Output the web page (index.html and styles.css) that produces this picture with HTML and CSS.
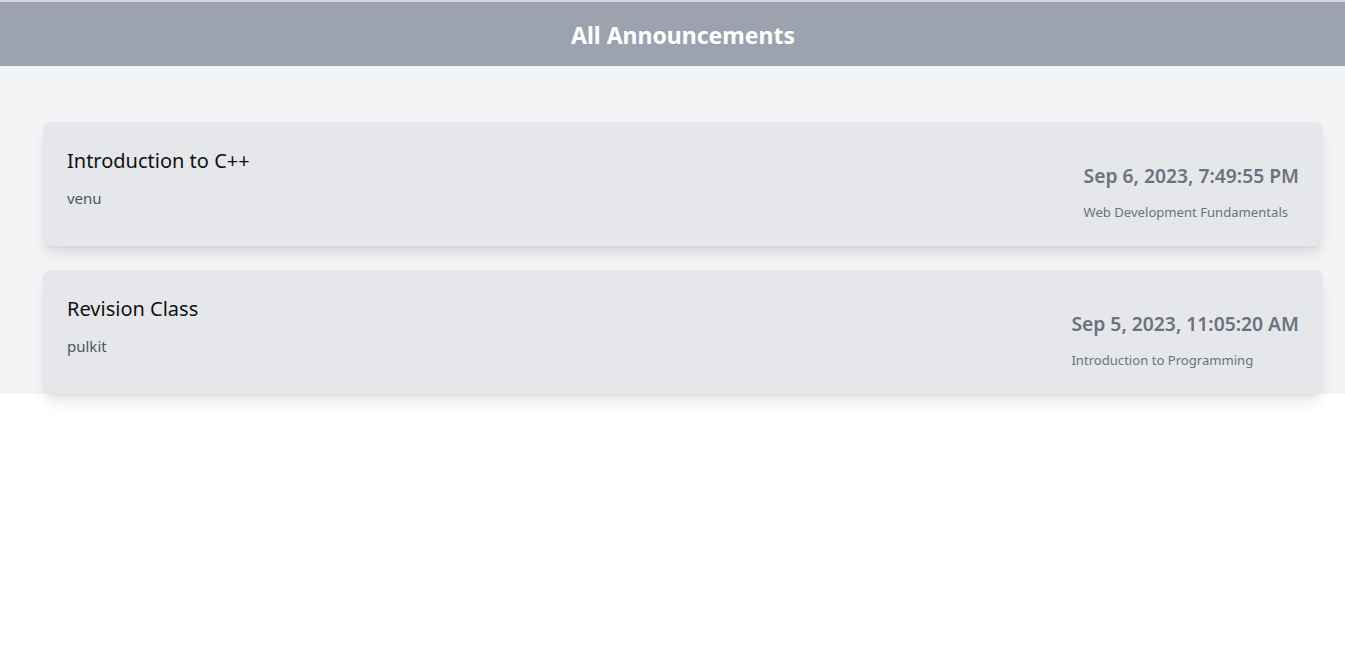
FILE: index.html
```html
<!DOCTYPE html>
<html lang="en">
<head>
<meta charset="utf-8">
<title>All Announcements</title>
<link rel="stylesheet" href="styles.css">
</head>
<body>
<header class="topbar">
  <h1 class="topbar-title">All Announcements</h1>
</header>
<main class="board">
  <article class="card">
    <div class="card-left">
      <h2 class="card-title">Introduction to C++</h2>
      <p class="card-author">venu</p>
    </div>
    <div class="card-right">
      <p class="card-date">Sep 6, 2023, 7:49:55 PM</p>
      <p class="card-course">Web Development Fundamentals</p>
    </div>
  </article>
  <article class="card">
    <div class="card-left">
      <h2 class="card-title">Revision Class</h2>
      <p class="card-author">pulkit</p>
    </div>
    <div class="card-right">
      <p class="card-date">Sep 5, 2023, 11:05:20 AM</p>
      <p class="card-course">Introduction to Programming</p>
    </div>
  </article>
</main>
</body>
</html>
```
FILE: styles.css
```css
* { box-sizing: border-box; }
html, body { margin: 0; padding: 0; background: #ffffff; }
body { font-family: "Noto Sans", "Open Sans", sans-serif; min-height: 100vh; }

.topbar {
  border-top: 2px solid #d1d5db;
  background: #9ca3af;
  height: 66px;
  padding-left: 21px;
  display: flex;
  align-items: center;
  justify-content: center;
}
.topbar-title {
  margin: 0;
  color: #ffffff;
  font-size: 23px;
  font-weight: 700;
  line-height: 32px;
  padding-top: 1px;
}

.board {
  background: #f3f4f6;
  padding: 56px 22px 0 43px;
  display: flex;
  flex-direction: column;
  gap: 24px;
}

.card {
  position: relative;
  background: #e5e7eb;
  border-radius: 8px;
  padding: 24px;
  display: flex;
  justify-content: space-between;
  align-items: flex-start;
  box-shadow: 0 10px 15px -3px rgba(0,0,0,0.1), 0 4px 6px -4px rgba(0,0,0,0.1);
}

.card-title {
  margin: 0;
  font-size: 20px;
  font-weight: 400;
  line-height: 28px;
  padding-top: 1px;
  color: #111111;
}
.card-author {
  margin: 11px 0 0;
  font-size: 15px;
  line-height: 24px;
  color: #4b5563;
}

.card-right { padding-top: 16px; }
.card-date {
  margin: 0;
  font-size: 19.3px;
  font-weight: 600;
  line-height: 28px;
  color: #6b7280;
}
.card-course {
  margin: 12px 0 0;
  font-size: 13.1px;
  line-height: 20px;
  color: #6b7280;
}
```
